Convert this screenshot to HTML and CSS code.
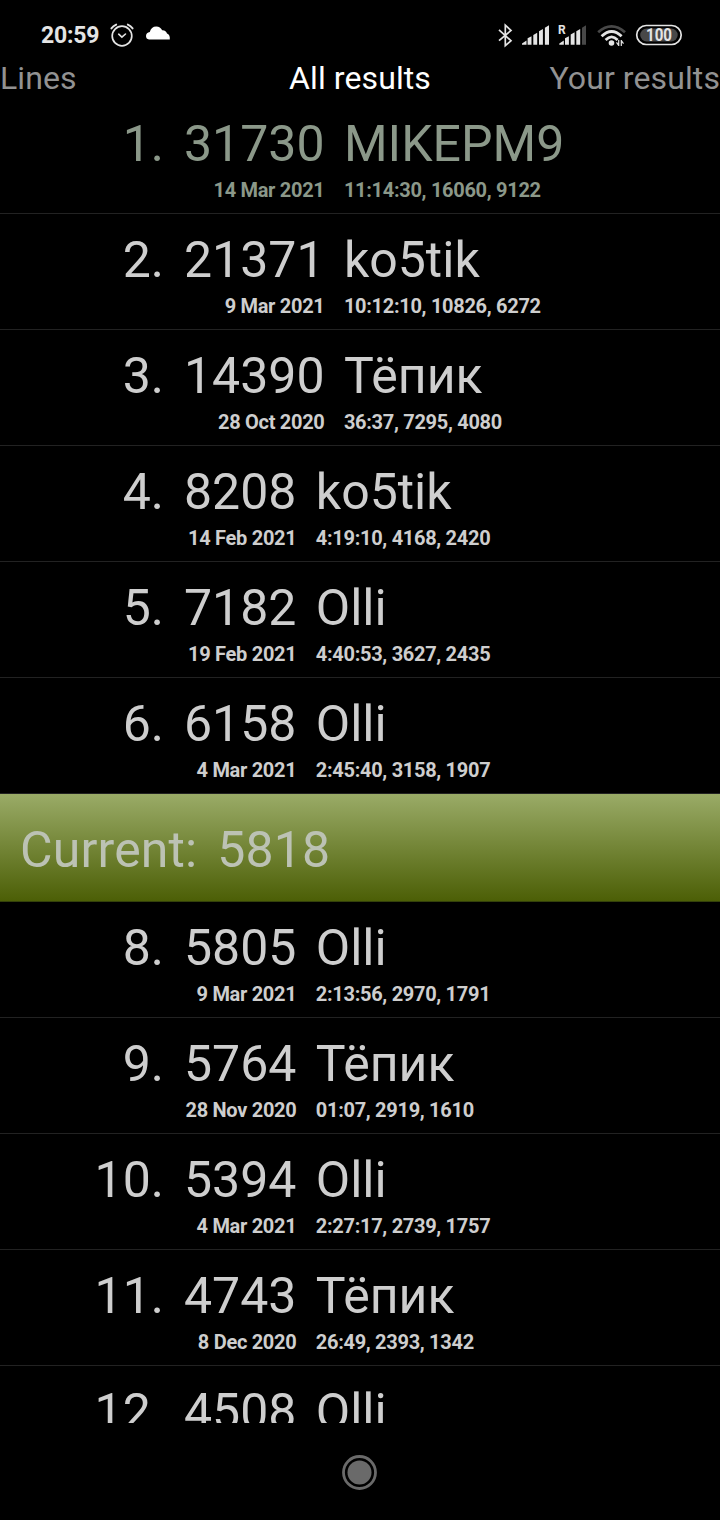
FILE: index.html
```
<!DOCTYPE html>
<html lang="en">
<head>
<meta charset="utf-8">
<title>All results</title>
<link rel="stylesheet" href="styles.css">
</head>
<body>
<div class="screen">
<header class="status">
  <div class="status-left">
    <span class="clock">20:59</span>
    <svg class="alarm" width="26" height="26" viewBox="0 0 26 26" fill="none" stroke="#e4e4e4" stroke-linecap="round">
      <circle cx="13" cy="14" r="9.8" stroke-width="1.7"/>
      <path d="M9.7 12.2l3.2 3 3.6-3.2" stroke-width="1.6"/>
      <path d="M2.4 6.400Q4.200 4 7.200 2.600M23.600 6.400Q21.800 4 18.800 2.600" stroke-width="1.9"/>
    </svg>
    <svg class="cloud" width="26" height="16" viewBox="0 0 26 16" fill="#fff"><path d="M4 14.500C2 14.200 1 13 1 11C1 8.800 2.500 7.300 4.800 7C5.500 3.500 8 1.500 11.300 1.500C14 1.500 16 3 17.200 5.300C19.800 5.200 21.500 6.500 22 8.500C24 9.200 25.200 11 24.800 14.500Z"/></svg>
  </div>
  <div class="status-right">
    <svg width="190" height="26" viewBox="0 0 190 26">
      <path d="M3 7.800L15 18.700L9.300 23.700V3.200L15 8.400L3 18.700" fill="none" stroke="#e4e4e4" stroke-width="1.700"/>
      <g fill="#e4e4e4">
        <path d="M26 22.700V21.500L30.500 18.500V22.700ZM31.600 22.700V16.300L35.500 14.200V22.700ZM37.300 22.700V13L41.200 10.800V22.700ZM43 22.700V9.300L46.900 7.100V22.700ZM48.900 22.700V5.700L53 3.200V22.700Z"/>
        <path d="M63.300 22.700V21.500L67.800 18.500V22.700ZM69 22.700V16.300L72.900 14.200V22.700ZM74.700 22.700V12.500L78.600 10.300V22.700ZM80.300 22.700V9.300L84.200 7.100V22.700Z"/>
        <path fill="#484848" d="M86 22.700V5.700L90 3.200V22.700Z"/>
      </g>
      <text class="roam" x="62" y="12">R</text>
      <g fill="none" stroke-width="2.800">
        <path d="M102.200 10.300Q115.500 -1.500 129 10.300" stroke="#484848"/>
        <path d="M105.600 14.200Q115.600 4.800 125.600 14.200M109.600 18Q115.600 11.800 121.600 18" stroke="#e4e4e4"/>
      </g>
      <circle cx="115.500" cy="21" r="2.800" fill="#e4e4e4"/>
      <path d="M122.700 18v6M125.300 18v6M122.700 23.400l-2.200-3M125.300 18.600l2.200 3" stroke="#e4e4e4" stroke-width="1.200" fill="none"/>
      <rect x="140.700" y="3.500" width="44.500" height="19" rx="9.500" fill="none" stroke="#e4e4e4" stroke-width="1.700"/>
      <rect x="144.200" y="6.500" width="37.500" height="13" rx="6.500" fill="#484848"/>
      <text class="battery" x="150" y="19" textLength="26" lengthAdjust="spacingAndGlyphs">100</text>
    </svg>
  </div>
</header>
<nav class="tabs">
  <span class="tab">Lines</span>
  <span class="tab active">All results</span>
  <span class="tab">Your results</span>
</nav>
<main class="results">
  <div class="row leader"><div class="rank">1.</div><div class="score"><b>31730</b><small>14 Mar 2021</small></div><div class="name"><b>MIKEPM9</b><small>11:14:30, 16060, 9122</small></div></div>
  <div class="row"><div class="rank">2.</div><div class="score"><b>21371</b><small>9 Mar 2021</small></div><div class="name"><b>ko5tik</b><small>10:12:10, 10826, 6272</small></div></div>
  <div class="row"><div class="rank">3.</div><div class="score"><b>14390</b><small>28 Oct 2020</small></div><div class="name"><b>Тёпик</b><small>36:37, 7295, 4080</small></div></div>
  <div class="row"><div class="rank">4.</div><div class="score"><b>8208</b><small>14 Feb 2021</small></div><div class="name"><b>ko5tik</b><small>4:19:10, 4168, 2420</small></div></div>
  <div class="row"><div class="rank">5.</div><div class="score"><b>7182</b><small>19 Feb 2021</small></div><div class="name"><b>Olli</b><small>4:40:53, 3627, 2435</small></div></div>
  <div class="row"><div class="rank">6.</div><div class="score"><b>6158</b><small>4 Mar 2021</small></div><div class="name"><b>Olli</b><small>2:45:40, 3158, 1907</small></div></div>
  <div class="current"><span>Current:</span><span>5818</span></div>
  <div class="row"><div class="rank">8.</div><div class="score"><b>5805</b><small>9 Mar 2021</small></div><div class="name"><b>Olli</b><small>2:13:56, 2970, 1791</small></div></div>
  <div class="row"><div class="rank">9.</div><div class="score"><b>5764</b><small>28 Nov 2020</small></div><div class="name"><b>Тёпик</b><small>01:07, 2919, 1610</small></div></div>
  <div class="row"><div class="rank">10.</div><div class="score"><b>5394</b><small>4 Mar 2021</small></div><div class="name"><b>Olli</b><small>2:27:17, 2739, 1757</small></div></div>
  <div class="row"><div class="rank">11.</div><div class="score"><b>4743</b><small>8 Dec 2020</small></div><div class="name"><b>Тёпик</b><small>26:49, 2393, 1342</small></div></div>
  <div class="row"><div class="rank">12.</div><div class="score"><b>4508</b></div><div class="name"><b>Olli</b></div></div>
</main>
<footer class="navbar">
  <svg width="36" height="36" viewBox="0 0 36 36"><circle cx="17.500" cy="17.500" r="16" fill="none" stroke="#6a6a6a" stroke-width="2.800"/><circle cx="17.500" cy="17.500" r="12" fill="#6a6a6a"/></svg>
</footer>
</div>
</body>
</html>
```
FILE: styles.css
```
* { box-sizing: border-box; }
body {
  margin: 0;
  background: #000;
  color: #cecece;
  font-family: Roboto, "Noto Sans", sans-serif;
}
.screen {
  display: flex;
  flex-direction: column;
  width: 720px;
  height: 1520px;
  overflow: hidden;
}
.status {
  display: flex;
  justify-content: space-between;
  height: 58px;
  padding: 22px 34px 0 41px;
}
.status-left { display: flex; align-items: flex-start; }
.clock {
  width: 58px;
  font-size: 23px;
  line-height: 27px;
  font-weight: 700;
  letter-spacing: -0.2px;
  color: #e4e4e4;
  white-space: nowrap;
}
.alarm { margin-left: 10px; }
.cloud { margin: 3px 0 0 10px; }
.roam { font: 700 12px Roboto, sans-serif; fill: #e4e4e4; }
.battery { font: 700 18px Roboto, sans-serif; fill: #e4e4e4; }
.tabs {
  display: grid;
  grid-template-columns: 1fr auto 1fr;
  height: 40px;
  line-height: 40px;
  font-size: 32px;
  letter-spacing: 0.1px;
  color: #929292;
  white-space: nowrap;
}
.tab:last-child { text-align: right; }
.active { color: #fff; }
.results { flex: none; height: 1325px; overflow: hidden; }
.row {
  display: flex;
  height: 116px;
  padding-top: 17px;
  border-bottom: 1px solid #222;
  white-space: nowrap;
}
.rank, .score b, .name b {
  font-size: 50px;
  line-height: 59px;
  font-weight: 400;
}
.rank { width: 164px; margin-right: 20px; text-align: right; }
.score, .name { display: flex; flex-direction: column; gap: 4px; }
.score { align-items: flex-end; margin-right: 19.4px; }
.row small {
  font-size: 20px;
  line-height: 24px;
  font-weight: 700;
  letter-spacing: -0.3px;
}
.leader { color: #8b9889; }
.current {
  display: flex;
  gap: 20px;
  height: 108px;
  padding: 27px 20px 0;
  background: linear-gradient(#9aab67, #4c5f06);
  border-bottom: 1px solid #34420a;
  font-size: 50px;
  line-height: 59px;
  letter-spacing: 0.15px;
  color: #bcc2b4;
}
.navbar { display: flex; justify-content: center; padding-top: 32px; }
```
